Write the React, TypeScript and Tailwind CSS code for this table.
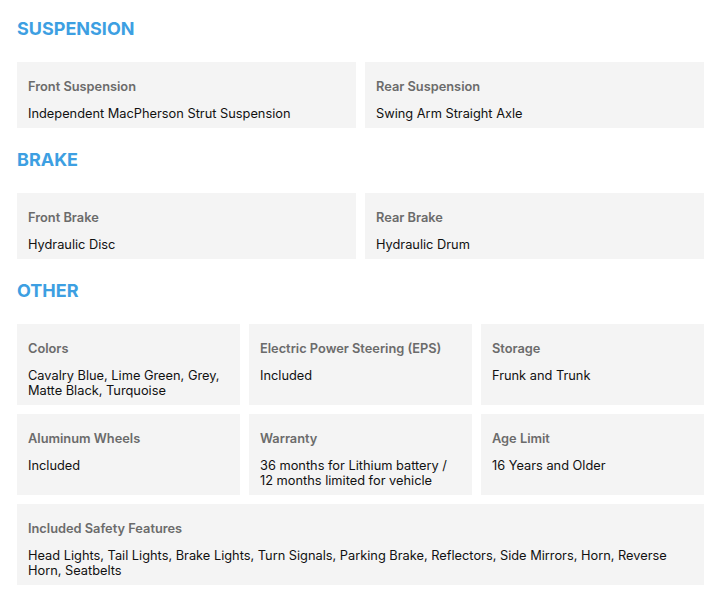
import React from "react";

interface Spec {
  label: string;
  value: string;
  wide?: boolean;
}

interface Section {
  title: string;
  cols: 2 | 3;
  items: Spec[];
}

const sections: Section[] = [
  {
    title: "SUSPENSION",
    cols: 2,
    items: [
      { label: "Front Suspension", value: "Independent MacPherson Strut Suspension" },
      { label: "Rear Suspension", value: "Swing Arm Straight Axle" },
    ],
  },
  {
    title: "BRAKE",
    cols: 2,
    items: [
      { label: "Front Brake", value: "Hydraulic Disc" },
      { label: "Rear Brake", value: "Hydraulic Drum" },
    ],
  },
  {
    title: "OTHER",
    cols: 3,
    items: [
      { label: "Colors", value: "Cavalry Blue, Lime Green, Grey, Matte Black, Turquoise" },
      { label: "Electric Power Steering (EPS)", value: "Included" },
      { label: "Storage", value: "Frunk and Trunk" },
      { label: "Aluminum Wheels", value: "Included" },
      { label: "Warranty", value: "36 months for Lithium battery / 12 months limited for vehicle" },
      { label: "Age Limit", value: "16 Years and Older" },
      {
        label: "Included Safety Features",
        value:
          "Head Lights, Tail Lights, Brake Lights, Turn Signals, Parking Brake, Reflectors, Side Mirrors, Horn, Reverse Horn, Seatbelts",
        wide: true,
      },
    ],
  },
];

const SpecCard: React.FC<{ item: Spec }> = ({ item }) => {
  return (
    <div
      className={`bg-[#f4f4f4] pl-[11px] pr-[11px] pt-[17px] pb-[7px] ${
        item.wide ? "col-span-3" : ""
      }`}
    >
      <div className="text-[12.8px] leading-[16px] font-semibold text-[#6b6b6b] mb-[11px]">
        {item.label}
      </div>
      <div className="text-[12.8px] leading-[15px] text-[#111111]">{item.value}</div>
    </div>
  );
};

export default function App() {
  return (
    <div
      className="bg-white pl-[17px] pr-[15px] pt-[15px] pb-[20px] flex flex-col gap-[18px]"
      style={{ fontFamily: "Inter, 'Liberation Sans', sans-serif" }}
    >
      {sections.map((section) => (
        <div key={section.title}>
          <h2 className="text-[18px] leading-[28px] font-bold text-[#3d9fe2] mb-[19px]">
            {section.title}
          </h2>
          <div
            className={`grid gap-[9px] ${
              section.cols === 3 ? "grid-cols-3" : "grid-cols-2"
            }`}
          >
            {section.items.map((item) => (
              <SpecCard key={item.label} item={item} />
            ))}
          </div>
        </div>
      ))}
    </div>
  );
}
